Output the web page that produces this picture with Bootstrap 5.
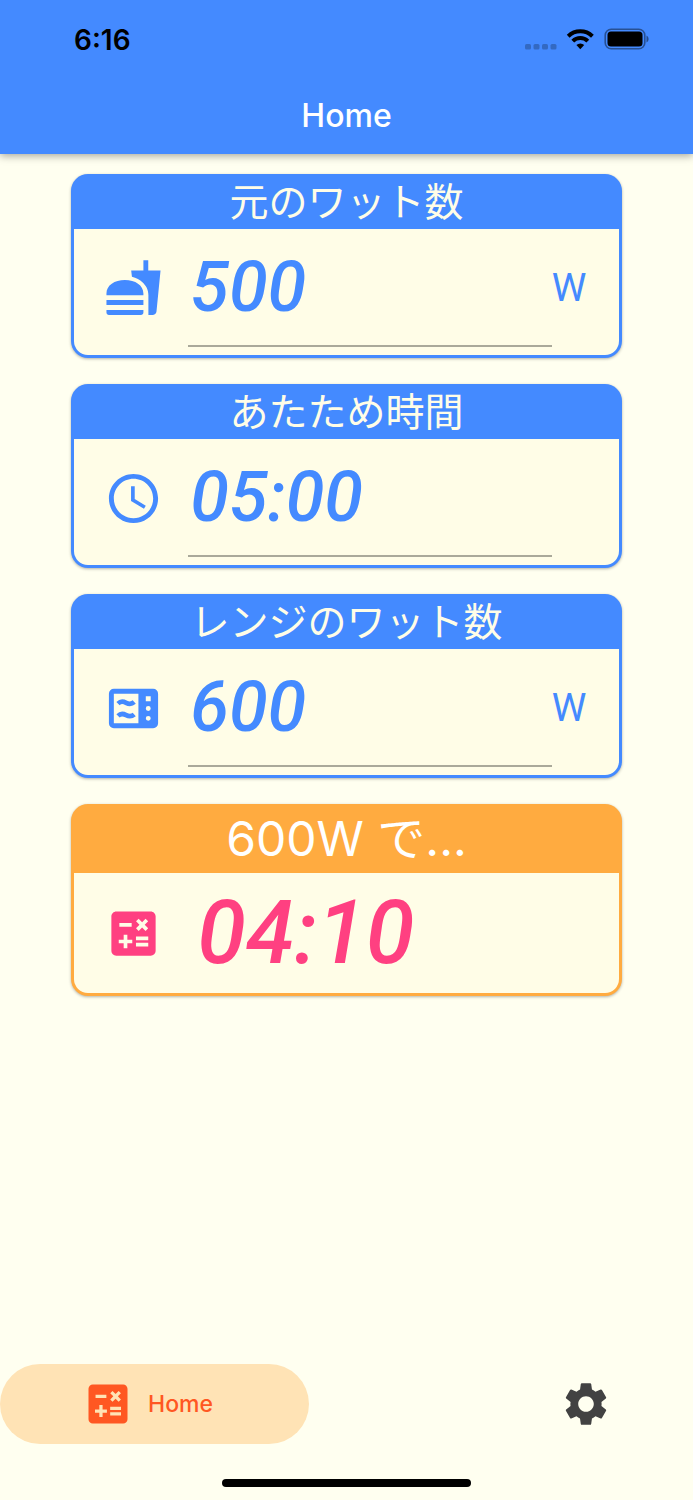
<!DOCTYPE html>
<html lang="ja">
<head>
<meta charset="utf-8">
<meta name="viewport" content="width=device-width, initial-scale=1">
<title>Home</title>
<link href="https://cdn.jsdelivr.net/npm/bootstrap@5.3.0/dist/css/bootstrap.min.css" rel="stylesheet">
<style>
  :root { --blue: #448aff; --orange: #ffab40; --pink: #ff4081; --cream: #fffde7; }
  body { background: #fffff0; font-family: Inter, "Noto Sans CJK JP", sans-serif; }
  .app-header { background: var(--blue); box-shadow: 0 2px 8px rgba(0,0,0,.35); }
  .status-bar { height: 78px; padding: 0 44px 0 74px; }
  .clock-text { font-size: 28px; line-height: 32px; font-weight: 600; color: #000; padding-top: 2px; }
  .title-bar { height: 76px; font-size: 32px; font-weight: 500; }
  .panels { padding: 20px calc(10% + 2px) 0; gap: 26px; }
  .panel { --tone: var(--blue); background: var(--tone); padding: 0 3px 3px; border-radius: 17px; box-shadow: 0 1px 3px rgba(0,0,0,.3); }
  .panel-result { --tone: var(--orange); }
  .panel-title { color: var(--cream); font-family: "Noto Sans CJK JP", sans-serif; font-size: 39px; font-weight: 400; line-height: 51px; padding-bottom: 4px; }
  .panel-result .panel-title { color: #fff; font-family: Inter, "Noto Sans CJK JP", sans-serif; font-size: 48px; line-height: 69px; padding: 0; }
  .panel-row { background: var(--cream); border-radius: 0 0 14px 14px; padding: 0 31px 8px 30px; color: var(--blue); }
  .panel-result .panel-row { height: 120px; padding-bottom: 0; color: var(--pink); }
  .icon-lg { width: 59px; height: 59px; }
  .icon-md { width: 52px; height: 52px; }
  .entry { height: 118px; margin-left: 25px; padding: 0 0 0 2px; border: 0; border-bottom: 2px solid #aaa99a; background: transparent; color: inherit; outline: 0; min-width: 0; }
  .digits { font-family: Roboto, sans-serif; font-style: italic; font-weight: 500; font-size: 70px; }
  .digits-lg { font-size: 88px; line-height: 110px; margin-left: 34px; }
  .unit { flex: 0 0 36px; font-size: 39px; font-family: Roboto, sans-serif; }
  .tab-current { width: 45%; max-width: 309px; height: 80px; padding-right: 14px; background: #ffe3b5; color: #ff5722; font-size: 23px; font-weight: 500; gap: 14px; }
  .tab-other { width: 31%; height: 80px; color: #424242; }
  .home-indicator { width: 36%; height: 8px; background: #000; margin: 35px auto 13px; }
</style>
</head>
<body class="d-flex flex-column min-vh-100">
<svg class="d-none" aria-hidden="true">
  <symbol id="calc" viewBox="0 0 24 24"><path fill="currentColor" d="M19 3H5c-1.1 0-2 .9-2 2v14c0 1.1.9 2 2 2h14c1.1 0 2-.9 2-2V5c0-1.1-.9-2-2-2zm-5.97 4.06L14.09 6l1.41 1.41L16.91 6l1.06 1.06-1.41 1.41 1.41 1.41-1.06 1.06-1.41-1.4-1.41 1.41-1.06-1.06 1.41-1.41-1.41-1.43zm-6.78.66h5v1.5h-5v-1.5zM11.5 16h-2v2H8v-2H6v-1.5h2v-2h1.5v2h2V16zm6.5 1.25h-5v-1.5h5v1.5zm0-2.5h-5v-1.5h5v1.5z"/></symbol>
</svg>

<header class="app-header">
  <div class="status-bar d-flex align-items-center justify-content-between">
    <span class="clock-text">6:16</span>
    <svg width="124" height="24" viewBox="0 0 124 24" aria-hidden="true">
      <g fill="#000" fill-opacity=".24"><rect x="0" y="17" width="6" height="5.500" rx="1.500"/><rect x="8.500" y="17" width="6" height="5.500" rx="1.500"/><rect x="17" y="17" width="6" height="5.500" rx="1.500"/><rect x="25.500" y="17" width="6" height="5.500" rx="1.500"/></g>
      <g fill="none" stroke="#000" stroke-width="4"><path d="M43.200 9.200a17.500 17.500 0 0 1 24.200 0"/><path d="M47.800 14.100a10.700 10.700 0 0 1 15 0"/></g>
      <path d="M55.300 22.300l-3.900-4.200a5.600 5.600 0 0 1 7.800 0z"/>
      <rect x="80.200" y="2.200" width="39.600" height="19.600" rx="6" fill="none" stroke="#000" stroke-opacity=".42" stroke-width="1.600"/>
      <rect x="82.500" y="4.500" width="35" height="15" rx="3.500"/>
      <path fill-opacity=".45" d="M121.500 8.500c2.800 1.500 2.800 5.500 0 7z"/>
    </svg>
  </div>
  <h1 class="title-bar text-white text-center d-flex align-items-center justify-content-center m-0">Home</h1>
</header>

<main class="panels d-flex flex-column flex-grow-1">
  <section class="panel">
    <label for="fromWatt" class="panel-title d-block text-center">元のワット数</label>
    <div class="panel-row d-flex align-items-center">
      <svg class="icon-lg flex-shrink-0" viewBox="0 0 24 24" fill="currentColor" aria-hidden="true"><path d="M18.060 22.800h1.660c.84 0 1.530-.64 1.630-1.460L23 4.700h-5V.5h-1.970v4.200h-4.970l.3 2.500c1.710.47 3.310 1.320 4.270 2.260 1.440 1.420 2.430 2.890 2.430 5.290zM1 21.800V20.700h15.030v1.100c0 .55-.45 1-1.010 1H2.010c-.56 0-1.010-.45-1.010-1zM16.030 14.700H1V14C1 10.600 4.300 8.500 8.500 8.500s7.530 2.100 7.530 5.500zM1 16.700h15.030v2H1z"/></svg>
      <input id="fromWatt" class="entry digits flex-grow-1" type="text" inputmode="numeric" value="500">
      <span class="unit">W</span>
    </div>
  </section>

  <section class="panel">
    <label for="heatTime" class="panel-title d-block text-center">あたため時間</label>
    <div class="panel-row d-flex align-items-center">
      <svg class="icon-lg flex-shrink-0" viewBox="0 0 24 24" fill="currentColor" aria-hidden="true"><path d="M11.990 2C6.470 2 2 6.480 2 12s4.470 10 9.990 10C17.520 22 22 17.520 22 12S17.520 2 11.990 2zM12 20c-4.420 0-8-3.580-8-8s3.580-8 8-8 8 3.580 8 8-3.580 8-8 8zm.5-13H11v6l5.250 3.150.75-1.230-4.500-2.670z"/></svg>
      <input id="heatTime" class="entry digits flex-grow-1" type="text" value="05:00">
      <span class="unit"></span>
    </div>
  </section>

  <section class="panel">
    <label for="toWatt" class="panel-title d-block text-center">レンジのワット数</label>
    <div class="panel-row d-flex align-items-center">
      <svg class="icon-lg flex-shrink-0" viewBox="0 0 24 24" aria-hidden="true"><path fill="currentColor" fill-rule="evenodd" d="M4 4h16a2 2 0 0 1 2 2v12a2 2 0 0 1-2 2H4a2 2 0 0 1-2-2V6a2 2 0 0 1 2-2zm0 2v12h10V6zM17 7v2h2V7zm1 4a1 1 0 1 0 0 2 1 1 0 0 0 0-2zm0 4a1 1 0 1 0 0 2 1 1 0 0 0 0-2z"/><path fill="none" stroke="currentColor" stroke-width="1.900" d="M5.700 10c1-1 2-1 3.300-.3s2.300.6 3.300-.3M5.700 15c1-1 2-1 3.300-.3s2.300.6 3.300-.3"/></svg>
      <input id="toWatt" class="entry digits flex-grow-1" type="text" inputmode="numeric" value="600">
      <span class="unit">W</span>
    </div>
  </section>

  <section class="panel panel-result">
    <h2 class="panel-title text-center m-0">600W で...</h2>
    <div class="panel-row d-flex align-items-center">
      <svg class="icon-lg flex-shrink-0" aria-hidden="true"><use href="#calc"/></svg>
      <output class="digits digits-lg">04:10</output>
    </div>
  </section>
</main>

<footer>
  <nav class="d-flex justify-content-between">
    <a href="#" class="tab-current rounded-pill d-flex align-items-center justify-content-center text-decoration-none" aria-current="page">
      <svg class="icon-md" aria-hidden="true"><use href="#calc"/></svg>
      <span>Home</span>
    </a>
    <a href="#settings" class="tab-other d-flex align-items-center justify-content-center" aria-label="設定">
      <svg class="icon-md" viewBox="0 0 24 24" fill="currentColor" aria-hidden="true"><path d="M19.140 12.940c.04-.3.060-.61.060-.94 0-.32-.02-.64-.07-.94l2.030-1.580c.18-.14.230-.41.120-.61l-1.920-3.320c-.12-.22-.37-.29-.59-.22l-2.390.96c-.5-.38-1.030-.7-1.620-.94l-.36-2.540c-.04-.24-.24-.41-.48-.41h-3.840c-.24 0-.43.170-.47.410l-.36 2.540c-.59.240-1.130.570-1.620.94l-2.390-.96c-.22-.08-.47 0-.59.220L2.740 8.870c-.12.210-.08.470.120.610l2.030 1.580c-.05.3-.09.630-.09.940s.02.640.070.940l-2.030 1.580c-.18.140-.23.410-.12.610l1.920 3.320c.12.220.37.290.59.220l2.390-.96c.5.380 1.030.7 1.620.94l.36 2.540c.05.240.24.410.48.410h3.840c.24 0 .44-.17.470-.41l.36-2.540c.59-.24 1.130-.56 1.620-.94l2.390.96c.22.080.47 0 .59-.22l1.920-3.320c.12-.22.070-.47-.12-.61l-2.010-1.580zM12 15.600c-1.980 0-3.600-1.620-3.600-3.600s1.620-3.600 3.600-3.600 3.600 1.620 3.600 3.600-1.620 3.600-3.600 3.600z"/></svg>
    </a>
  </nav>
  <div class="home-indicator rounded-pill"></div>
</footer>
<script src="https://cdn.jsdelivr.net/npm/bootstrap@5.3.0/dist/js/bootstrap.bundle.min.js"></script>
</body>
</html>
